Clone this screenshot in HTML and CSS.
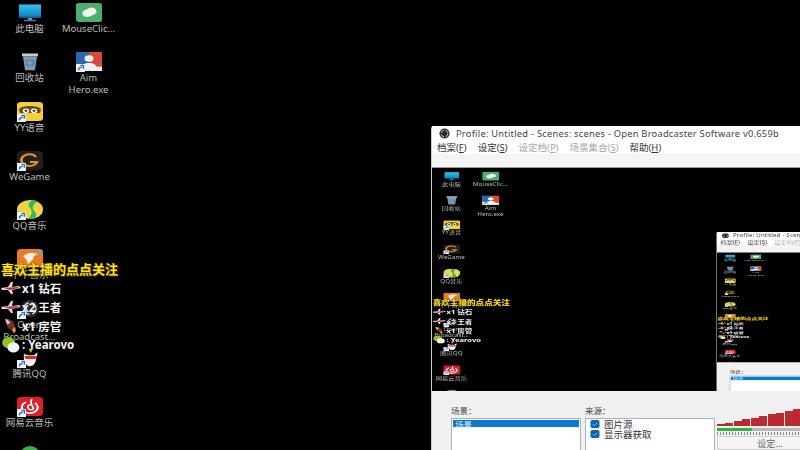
FILE: index.html
```html
<!DOCTYPE html>
<html lang="zh-CN">
<head>
  <meta charset="UTF-8">
  <title>Open Broadcaster Software</title>
  <link rel="stylesheet" href="styles.css">
</head>
<body>

  <!-- shared desktop icons -->
  <svg class="defs" width="0" height="0">
    <defs>
      <linearGradient id="screen-blue" x1="0" y1="0" x2="0" y2="1">
        <stop offset="0" stop-color="#35c4ea"/>
        <stop offset="1" stop-color="#0f7fc4"/>
      </linearGradient>
      <symbol id="i-pc" viewBox="0 0 26 26" preserveAspectRatio="none">
        <rect x="2" y="2" width="22" height="17" fill="url(#screen-blue)"/>
        <rect x="2" y="19" width="22" height="1.5" fill="#0a5d92"/>
        <rect x="11" y="20.5" width="4" height="3" fill="#7a93a5"/>
        <rect x="7" y="23" width="12" height="2" fill="#3f7fa8"/>
      </symbol>
      <symbol id="i-mouse" viewBox="0 0 26 26" preserveAspectRatio="none">
        <rect x="0" y="0" width="26" height="26" rx="3" fill="#4caf6e"/>
        <rect x="6" y="8" width="15" height="10" rx="5" fill="#f1f5f1" transform="rotate(-32 13 13)"/>
      </symbol>
      <symbol id="i-bin" viewBox="0 0 26 26" preserveAspectRatio="none">
        <path d="M6 6h14l-2 19H8z" fill="#8c97a3"/>
        <rect x="5" y="2" width="16" height="4" fill="#c4ccd3"/>
        <circle cx="13" cy="15" r="4" fill="none" stroke="#2c8fd8" stroke-width="2.2" stroke-dasharray="5 1.5"/>
      </symbol>
      <symbol id="i-aim" viewBox="0 0 26 26" preserveAspectRatio="none">
        <rect width="26" height="26" fill="#e8edf2"/>
        <rect width="13" height="20" fill="#2d66ad"/>
        <rect x="13" width="13" height="20" fill="#d9483b"/>
        <circle cx="13" cy="9" r="4.5" fill="#eef2f5"/>
        <path d="M5 24c0-7 4-9 8-9s8 2 8 9z" fill="#eef2f5"/>
      </symbol>
      <symbol id="i-yy" viewBox="0 0 26 26" preserveAspectRatio="none">
        <rect width="26" height="26" rx="4" fill="#f4cf3c"/>
        <path d="M2 10c2-6 20-6 22 0l-1 5H3z" fill="#6b4a1e"/>
        <circle cx="9" cy="12" r="3.2" fill="#fff"/>
        <circle cx="17" cy="12" r="3.2" fill="#fff"/>
        <circle cx="9" cy="12" r="1.5" fill="#222"/>
        <circle cx="17" cy="12" r="1.5" fill="#222"/>
      </symbol>
      <symbol id="i-wegame" viewBox="0 0 26 26" preserveAspectRatio="none">
        <rect width="26" height="26" rx="5" fill="#22201f"/>
        <path d="M19 8a8 8 0 1 0 1 7h-7" fill="none" stroke="#e8912c" stroke-width="2.6"/>
      </symbol>
      <symbol id="i-qqmusic" viewBox="0 0 26 26" preserveAspectRatio="none">
        <ellipse cx="13" cy="13" rx="13" ry="13" fill="#f2d53c"/>
        <path d="M17 0c-5 2-7 6-4 11s2 10-2 15c7 1 9-2 8-7s-4-6-3-10 3-6 5-7z" fill="#31b56a"/>
      </symbol>
      <symbol id="i-orange" viewBox="0 0 26 26" preserveAspectRatio="none">
        <rect width="26" height="26" rx="4" fill="#ea7a24"/>
        <path d="M6 10c5-6 12-6 15-2-3 0-5 2-5 6l-5 7c-1-5-2-8-5-11z" fill="#f5efe2"/>
        <path d="M21 1h4v9z" fill="#5aa7d8"/>
      </symbol>
      <symbol id="i-obs" viewBox="0 0 26 26">
        <circle cx="13" cy="13" r="12" fill="#2b2b2b"/>
        <circle cx="13" cy="13" r="8" fill="none" stroke="#ddd" stroke-width="2" stroke-dasharray="9 4"/>
      </symbol>
      <symbol id="i-qq" viewBox="0 0 26 26" preserveAspectRatio="none">
        <path d="M5 8l5 2h8l5-4-2 8c0 6-4 11-8 11s-7-5-8-10z" fill="#f4f4f4"/>
        <path d="M6 11h16l-1 4H7z" fill="#d8321f"/>
        <path d="M11 1l3 6 3-6z" fill="#e8b12c"/>
      </symbol>
      <symbol id="i-netease" viewBox="0 0 26 26" preserveAspectRatio="none">
        <rect width="26" height="26" rx="4" fill="#dc1f26"/>
        <path d="M9 7a8 8 0 1 0 9 1" fill="none" stroke="#fff" stroke-width="2.2"/>
        <path d="M15 3c-2 3-1 7 1 11s-4 5-5 1 2-5 4-5" fill="none" stroke="#fff" stroke-width="1.8"/>
      </symbol>
      <symbol id="i-green" viewBox="0 0 26 26" preserveAspectRatio="none">
        <ellipse cx="13" cy="13" rx="13" ry="13" fill="#3cae4a"/>
      </symbol>
      <symbol id="i-link" viewBox="0 0 10 10" preserveAspectRatio="none">
        <rect width="10" height="10" fill="#f3f3f3"/>
        <path d="M2.5 8C3 5 4.5 4 6.5 4M5 1.6h3.2v4.4" fill="none" stroke="#2470c8" stroke-width="1.6"/>
      </symbol>
      <symbol id="i-plane" viewBox="0 0 20 14">
        <path d="M0 7l7-1 3-5h2l-1 5 7-1 2 2-9 2 1 4h-2l-3-4H1z" fill="#e9d8d8"/>
        <path d="M3 7l14-1 1 1-9 2z" fill="#b5303a"/>
      </symbol>
      <symbol id="i-rocket" viewBox="0 0 20 20">
        <path d="M3 1c7 0 11 4 12 10l-4 4C6 14 3 8 3 1z" fill="#7b2a35"/>
        <path d="M3 1c3 1 5 3 6 5L6 8C4 6 3 4 3 1z" fill="#d4c8c8"/>
        <path d="M11 15l4-4 1 5-2 3z" fill="#eba32a"/>
      </symbol>
      <symbol id="i-wechat" viewBox="0 0 22 20">
        <ellipse cx="8" cy="7" rx="8" ry="7" fill="#8fc31f"/>
        <ellipse cx="14" cy="13" rx="7.5" ry="6.5" fill="#f4f4f4"/>
      </symbol>
      <symbol id="i-checkbox" viewBox="0 0 10 10">
        <rect width="10" height="9" rx="2" fill="#0b66b4"/>
        <path d="M2.8 4.6l1.6 1.6 3-3" fill="none" stroke="#8fc4ec" stroke-width="1"/>
      </symbol>
    </defs>
  </svg>

  <div class="scene">
    <div class="icon-col">
      <div class="icon"><svg><use href="#i-pc"/></svg><span>此电脑</span></div>
      <div class="icon"><svg><use href="#i-bin"/></svg><span>回收站</span></div>
      <div class="icon"><svg><use href="#i-yy"/></svg><svg class="badge"><use href="#i-link"/></svg><span>YY语音</span></div>
      <div class="icon"><svg><use href="#i-wegame"/></svg><svg class="badge"><use href="#i-link"/></svg><span>WeGame</span></div>
      <div class="icon"><svg><use href="#i-qqmusic"/></svg><svg class="badge"><use href="#i-link"/></svg><span>QQ音乐</span></div>
      <div class="icon"><svg><use href="#i-orange"/></svg><span>千千音乐</span></div>
      <div class="icon"><svg class="small"><use href="#i-obs"/></svg><svg class="badge"><use href="#i-link"/></svg><span>Open<br>Broadcast...</span></div>
      <div class="icon"><svg class="small"><use href="#i-qq"/></svg><svg class="badge"><use href="#i-link"/></svg><span>腾讯QQ</span></div>
      <div class="icon"><svg><use href="#i-netease"/></svg><svg class="badge"><use href="#i-link"/></svg><span>网易云音乐</span></div>
      <div class="icon"><svg class="small"><use href="#i-green"/></svg></div>
    </div>
    <div class="icon-col">
      <div class="icon"><svg><use href="#i-mouse"/></svg><span>MouseClic...</span></div>
      <div class="icon"><svg><use href="#i-aim"/></svg><svg class="badge"><use href="#i-link"/></svg><span>Aim<br>Hero.exe</span></div>
    </div>

    <!-- gift list stream overlay -->
    <div class="overlay">
      <div class="follow">喜欢主播的点点关注</div>
      <div class="gift"><svg><use href="#i-plane"/></svg>x1 钻石</div>
      <div class="gift"><svg><use href="#i-plane"/></svg>x2 王者</div>
      <div class="gift"><svg><use href="#i-rocket"/></svg>x1 房管</div>
      <div class="gift"><svg><use href="#i-wechat"/></svg>: Yearovo</div>
    </div>

    <div class="obs-window">
      <div class="titlebar">
        <svg><use href="#i-obs"/></svg>
        Profile: Untitled - Scenes: scenes - Open Broadcaster Software v0.659b
      </div>
      <div class="menubar">
        <span>档案(<u>F</u>)</span>
        <span>设定(<u>S</u>)</span>
        <span class="off">设定档(<u>P</u>)</span>
        <span class="off">场景集合(<u>S</u>)</span>
        <span>帮助(<u>H</u>)</span>
      </div>
      <div class="toolbar"></div>
      <div class="preview"></div>
      <div class="panel">
        <div class="list-col">
          <div class="list-title">场景：</div>
          <div class="listbox"><div class="row selected">场景</div></div>
        </div>
        <div class="list-col">
          <div class="list-title">来源：</div>
          <div class="listbox sources">
            <div class="row"><svg><use href="#i-checkbox"/></svg>图片源</div>
            <div class="row"><svg><use href="#i-checkbox"/></svg>显示器获取</div>
          </div>
        </div>
        <div class="audio-col">
          <div class="meter">
            <i style="height:2px"></i><i style="height:3.5px"></i><i style="height:5px"></i><i style="height:7px"></i>
            <i style="height:8.5px"></i><i style="height:10px"></i><i style="height:12px"></i><i style="height:13.5px"></i>
            <i style="height:15px"></i><i style="height:17px"></i><i style="height:17px"></i>
          </div>
          <div class="level"><div class="level-fill"></div></div>
          <div class="ticks"></div>
          <button class="settings">设定...</button>
        </div>
      </div>
    </div>
  </div>

  <script src="script.js"></script>
</body>
</html>
```

FILE: styles.css
```css
* { margin: 0; padding: 0; box-sizing: border-box; }
body {
  font-family: "Noto Sans", "Noto Sans CJK SC", sans-serif;
  background-color: black;
  overflow: hidden;
}

.defs { position: absolute; }

.scene {
  position: relative;
  display: flex;
  width: 800px;
  height: 450px;
  padding-top: 3px;
  background-color: black;
  overflow: hidden;
}

.icon-col {
  display: flex;
  flex-direction: column;
  width: 59px;
  height: 500px;
  flex-shrink: 0;
}

.icon {
  position: relative;
  display: flex;
  flex-direction: column;
  align-items: center;
  height: 49.25px;
  flex-shrink: 0;
  font-size: 9.5px;
  line-height: 12px;
  color: #bdbdbd;
  text-align: center;
  white-space: nowrap;
}
.icon svg { width: 26px; height: 19px; flex-shrink: 0; }
.icon svg.small { width: 20px; }
.icon span { margin-top: 1px; }

/* shortcut arrow on the icon corner */
.icon svg.badge {
  position: absolute;
  top: 12px;
  left: 17px;
  width: 9px;
  height: 8px;
}

.overlay {
  position: absolute;
  top: 260px;
  left: 1px;
  z-index: 2;
}

.follow {
  height: 18px;
  font-size: 13px;
  font-weight: 700;
  line-height: 18px;
  color: #ffe21a;
  text-shadow: 0 0 2px #5a4300, 1px 1px 0 #3a2c00;
  white-space: nowrap;
}

.gift {
  display: flex;
  align-items: center;
  gap: 1px;
  height: 19px;
  font-size: 11.5px;
  font-weight: 700;
  color: #f4f4f4;
  white-space: nowrap;
}
.gift svg { width: 20px; height: 16px; }

.obs-window {
  position: absolute;
  top: 126px;
  left: 432px;
  width: 640px;
  height: 340px;
  background-color: #f0f0f0;
  border-radius: 3px 3px 0 0;
  box-shadow: -1px 0 0 #cfcfcf;
  z-index: 3;
}

.titlebar {
  display: flex;
  align-items: center;
  gap: 6px;
  height: 14px;
  padding-left: 7px;
  background-color: white;
  font-size: 9.3px;
  letter-spacing: 0.25px;
  color: #444;
  white-space: nowrap;
}
.titlebar svg { width: 11px; height: 11px; }

.menubar {
  display: flex;
  gap: 11px;
  align-items: center;
  height: 14px;
  padding-left: 5px;
  background-color: white;
  font-size: 9.5px;
  color: #333;
}
.menubar .off { color: #a8a8a8; }

.toolbar {
  height: 14px;
  background-color: #f4f4f4;
  border-bottom: 1px solid #9a9a9a;
}

.preview {
  height: 223px;
  padding-top: 1.5px;
  background-color: black;
  overflow: hidden;
}

.preview .scene {
  transform: scale(0.66, 0.492);
  transform-origin: 0 0;
  filter: blur(0.5px);
}

.panel {
  display: flex;
  gap: 4px;
  padding: 14px 0 0 19px;
  background-color: #f0f0f0;
}

.list-col { width: 130px; }

.list-title {
  height: 13px;
  font-size: 8.5px;
  line-height: 12px;
  color: #444;
}

.listbox {
  height: 60px;
  padding: 1px;
  background-color: white;
  border: 1px solid #a9b4bd;
}

.row {
  display: flex;
  align-items: center;
  height: 7px;
  font-size: 8.5px;
  color: #333;
}
.row.selected { padding-left: 2px; background-color: #0a78d0; color: #dce9f5; }

.sources { padding: 0 4px; }
.sources .row { height: 10px; gap: 4px; font-size: 9.5px; }
.sources svg { width: 10px; height: 9px; }

.audio-col {
  width: 130px;
  margin-left: -2px;
}

.meter {
  display: flex;
  align-items: flex-end;
  gap: 0.8px;
  height: 17px;
  margin-top: 4px;
}
.meter i { width: 7.7px; background-color: #bb2a33; flex-shrink: 0; }

.level {
  height: 3px;
  margin-top: 2px;
  background-color: #b8b8b8;
}
.level-fill { width: 35px; height: 3px; background-color: #2fb43a; }

.ticks {
  height: 3px;
  margin-top: 1px;
  background-image: repeating-linear-gradient(to right, #888 0 1px, transparent 1px 3px);
}

.settings {
  display: block;
  width: 106px;
  height: 14px;
  margin-top: 1px;
  background-color: #f5f5f5;
  border: 1px solid #d0d0d0;
  border-radius: 2px;
  font: 9px "Noto Sans CJK SC", sans-serif;
  color: #666;
}
```

FILE: script.js
```js
// the preview shows the desktop itself, so the scene gets nested inside its own preview
const scene = document.querySelector('.scene');
const inner = scene.cloneNode(true);
inner.querySelector('.preview').appendChild(inner.cloneNode(true));
scene.querySelector('.preview').appendChild(inner);
```
